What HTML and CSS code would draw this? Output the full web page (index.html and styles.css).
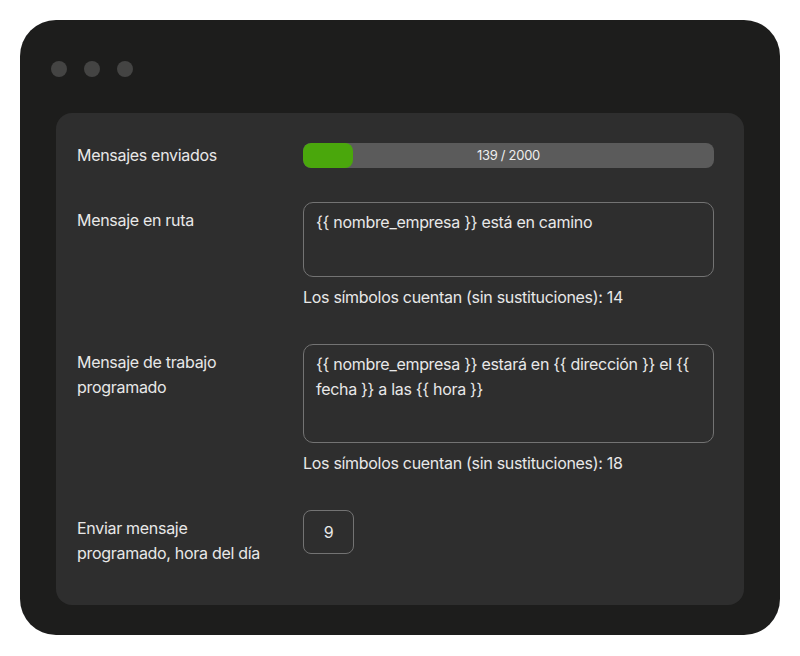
FILE: index.html
```html
<!DOCTYPE html>
<html lang="es">
<head>
  <meta charset="UTF-8" />
  <title>Configuración de mensajes</title>
  <link rel="stylesheet" href="styles.css">
</head>
<body>
  <div class="window">
    <div class="dots">
      <span class="dot"></span>
      <span class="dot"></span>
      <span class="dot"></span>
    </div>

    <div class="panel">
      <div class="row row-center">
        <div class="label">Mensajes enviados</div>
        <div class="control">
          <div class="bar">
            <div class="bar-fill" style="width: 12.2%"></div>
            <span class="bar-text">139 / 2000</span>
          </div>
        </div>
      </div>

      <div class="row">
        <div class="label">Mensaje en ruta</div>
        <div class="control">
          <div class="textbox short">{{ nombre_empresa }} está en camino</div>
          <div class="hint">Los símbolos cuentan (sin sustituciones): 14</div>
        </div>
      </div>

      <div class="row">
        <div class="label">Mensaje de trabajo programado</div>
        <div class="control">
          <div class="textbox tall">{{ nombre_empresa }} estará en {{ dirección }} el {{ fecha }} a las {{ hora }}</div>
          <div class="hint">Los símbolos cuentan (sin sustituciones): 18</div>
        </div>
      </div>

      <div class="row">
        <div class="label">Enviar mensaje programado, hora del día</div>
        <div class="control">
          <div class="hour">9</div>
        </div>
      </div>
    </div>
  </div>
</body>
</html>
```

FILE: styles.css
```css
body {
  margin: 0;
  padding: 20px;
  background: #ffffff;
  font-family: 'Inter', 'Noto Sans', sans-serif;
  color: #e8e8e8;
  letter-spacing: -0.3px;
}
.window {
  width: 760px;
  height: 615px;
  box-sizing: border-box;
  background: #1d1d1c;
  border-radius: 36px;
  padding: 41px 36px 30px 36px;
}
.dots {
  display: flex;
  gap: 17px;
  margin-left: -5px;
  height: 16px;
}
.dot {
  width: 16px;
  height: 16px;
  border-radius: 50%;
  background: #444443;
}
.panel {
  margin-top: 36px;
  background: #2e2e2e;
  border-radius: 16px;
  padding: 30px 30px 39px 21px;
}
.row {
  display: grid;
  grid-template-columns: 226px 1fr;
  margin-bottom: 37px;
}
.row:first-child {
  margin-bottom: 34px;
}
.row:last-child {
  margin-bottom: 0;
}
.row-center {
  align-items: center;
}
.label {
  font-size: 16px;
  line-height: 25px;
  padding-top: 6px;
  padding-right: 22px;
}
.row-center .label {
  padding-top: 0;
}
.bar {
  position: relative;
  height: 25px;
  background: #5b5b5b;
  border-radius: 8px;
  overflow: hidden;
}
.bar-fill {
  height: 100%;
  background: #4aa70c;
  border-radius: 8px;
}
.bar-text {
  position: absolute;
  left: 0;
  right: 0;
  top: 0;
  line-height: 25px;
  text-align: center;
  font-size: 13px;
  color: #eeeeee;
}
.textbox {
  box-sizing: border-box;
  border: 1px solid #737373;
  border-radius: 10px;
  padding: 7px 20px 0 12px;
  font-size: 16px;
  line-height: 25px;
}
.short { height: 75px; }
.tall { height: 99px; }
.hint {
  margin-top: 10px;
  font-size: 16px;
  line-height: 20px;
}
.hour {
  box-sizing: border-box;
  width: 51px;
  height: 44px;
  border: 1px solid #737373;
  border-radius: 8px;
  font-size: 16px;
  line-height: 42px;
  text-align: center;
}
```
